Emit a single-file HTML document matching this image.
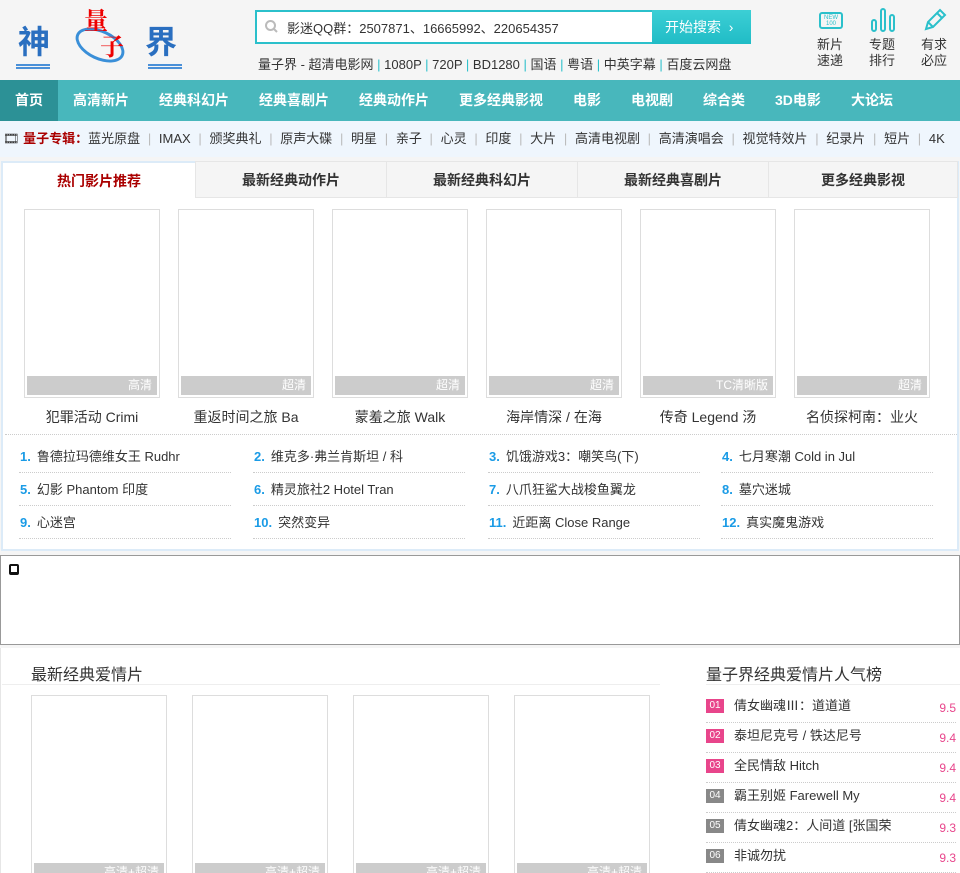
<!DOCTYPE html>
<html style="width:960px;height:873px;overflow:hidden"><head><meta charset="utf-8"><style>
*{margin:0;padding:0;box-sizing:border-box}
body{width:960px;height:873px;overflow:hidden;background:#f5f5f5;font-family:"Liberation Sans","Noto Sans CJK SC",sans-serif;font-size:13px;color:#333;position:relative}
.a{position:absolute}
.nav{top:80px;left:0;width:960px;height:41px;background:#48b7bc}
.nav span{position:absolute;top:0;line-height:41px;color:#fff;font-weight:bold;font-size:14px}
.sub{top:121px;left:0;width:960px;height:36px;background:#eff6fd;line-height:36px;font-size:13px;color:#333;padding-left:3px;white-space:nowrap}
.sub i{color:#bbb;font-style:normal;margin:0 7.7px}
.panel{top:161px;left:1px;width:958px;height:390px;background:#fff;border:2px solid #dcebf8;border-top:none}
.tab{position:absolute;top:0;height:37px;line-height:37px;text-align:center;font-weight:bold;font-size:14px;background:#f5f5f5;border:1px solid #e6e6e6;color:#333}
.p{position:absolute;border:1px solid #ddd;background:#fff;width:136px;height:189px}
.p b{position:absolute;left:2px;right:2px;bottom:2px;height:19px;background:#ccc;color:#fff;font-weight:normal;text-align:right;padding-right:5px;line-height:19px;font-size:12px}
.t{position:absolute;width:150px;text-align:center;font-size:14px;color:#333}
.li{position:absolute;width:212px;height:33px;line-height:33px;border-bottom:1px dotted #ccc;font-size:13px;padding-left:1px;white-space:nowrap;overflow:hidden}
.li em{color:#1a9be6;font-weight:bold;font-style:normal;margin-right:6px}
.rk{position:absolute;left:706px;width:250px;height:30px;border-bottom:1px dotted #ccc;font-size:13px}
.rk b{position:absolute;left:0;top:6px;width:18px;height:14px;font-size:10px;color:#fff;text-align:center;line-height:14px;font-weight:normal;background:#888}
.rk span{position:absolute;left:28px;top:2px}
.rk i{position:absolute;right:0;top:8px;color:#e8458b;font-style:normal;font-size:12px}
</style></head><body>
<div class="a" style="left:18px;top:20px;font-size:32px;color:#2a6fc0;font-weight:bold;font-family:'Noto Sans CJK SC',sans-serif;line-height:40px">神</div>
<div class="a" style="left:16px;top:64px;width:34px;height:5px;border-top:2px solid #4a90d8;border-bottom:2px solid #4a90d8"></div>
<div class="a" style="left:74px;top:30px;width:52px;height:30px;border:3px solid #3a8fd8;border-radius:50%;transform:rotate(25deg)"></div>
<div class="a" style="left:84px;top:6px;font-size:24px;color:#e00;font-weight:bold;font-family:'Noto Serif CJK SC',serif;line-height:26px">量<br><span style="margin-left:16px">子</span></div>
<div class="a" style="left:145px;top:20px;font-size:32px;color:#2a6fc0;font-weight:bold;font-family:'Noto Sans CJK SC',sans-serif;line-height:40px">界</div>
<div class="a" style="left:148px;top:64px;width:34px;height:5px;border-top:2px solid #4a90d8;border-bottom:2px solid #4a90d8"></div>
<div class="a" style="left:255px;top:10px;width:398px;height:34px;background:#fff;border:2px solid #2bc0cb;border-right:none"></div>
<svg class="a" style="left:264px;top:19px" width="16" height="16"><circle cx="6.5" cy="6.5" r="4.5" stroke="#bbb" stroke-width="2" fill="none"/><path d="M10 10 L13 13" stroke="#bbb" stroke-width="2"/></svg>
<div class="a" style="left:287px;top:18px;font-size:13px;color:#333">影迷QQ群：2507871、16665992、220654357</div>
<div class="a" style="left:652px;top:10px;width:99px;height:34px;background:linear-gradient(#3ccfd5,#20bcc6);color:#fff;font-size:14px;line-height:34px;padding-left:13px">开始搜索 &nbsp;›</div>
<div class="a" style="left:258px;top:54px;font-size:13px;color:#333;white-space:nowrap">量子界 - 超清电影网 <span style="color:#2bc0cb">|</span> 1080P <span style="color:#2bc0cb">|</span> 720P <span style="color:#2bc0cb">|</span> BD1280 <span style="color:#2bc0cb">|</span> 国语 <span style="color:#2bc0cb">|</span> 粤语 <span style="color:#2bc0cb">|</span> 中英字幕 <span style="color:#2bc0cb">|</span> 百度云网盘</div>
<div class="a" style="left:819px;top:12px;width:24px;height:17px;border:2px solid #2bc0cb;border-radius:3px;font-size:6px;color:#2bc0cb;text-align:center;line-height:6px;padding-top:1px">NEW<br>100</div>
<svg class="a" style="left:870px;top:7px" width="26" height="26"><g stroke="#2bc0cb" stroke-width="2" fill="none"><rect x="2" y="13" width="4" height="11" rx="2"/><rect x="11" y="2" width="4" height="22" rx="2"/><rect x="20" y="8" width="4" height="16" rx="2"/></g></svg>
<svg class="a" style="left:922px;top:7px" width="26" height="26"><path d="M4 22 L6 15 L18 3 L23 8 L11 20 Z M15 6 L20 11 M6 15 L11 20" stroke="#2bc0cb" stroke-width="2" fill="none"/></svg>
<div class="a" style="left:817px;top:37px;font-size:13px;line-height:16px;color:#333">新片<br>速递</div>
<div class="a" style="left:869px;top:37px;font-size:13px;line-height:16px;color:#333">专题<br>排行</div>
<div class="a" style="left:921px;top:37px;font-size:13px;line-height:16px;color:#333">有求<br>必应</div>
<div class="a nav"><div class="a" style="left:0;top:0;width:58px;height:41px;background:#2c9196"></div>
<span style="left:15px">首页</span><span style="left:73px">高清新片</span><span style="left:159px">经典科幻片</span><span style="left:259px">经典喜剧片</span><span style="left:359px">经典动作片</span><span style="left:459px">更多经典影视</span><span style="left:573px">电影</span><span style="left:631px">电视剧</span><span style="left:703px">综合类</span><span style="left:775px">3D电影</span><span style="left:851px">大论坛</span></div>
<div class="a sub">🎞 <b style="color:#a00">量子专辑：</b>蓝光原盘<i>|</i>IMAX<i>|</i>颁奖典礼<i>|</i>原声大碟<i>|</i>明星<i>|</i>亲子<i>|</i>心灵<i>|</i>印度<i>|</i>大片<i>|</i>高清电视剧<i>|</i>高清演唱会<i>|</i>视觉特效片<i>|</i>纪录片<i>|</i>短片<i>|</i>4K</div>
<div class="a panel">
<div class="tab" style="left:0;width:192px;background:#fff;border:none;border-top:2px solid #dcebf8;color:#a00">热门影片推荐</div>
<div class="tab" style="left:192px;width:192px">最新经典动作片</div>
<div class="tab" style="left:383px;width:192px">最新经典科幻片</div>
<div class="tab" style="left:574px;width:192px">最新经典喜剧片</div>
<div class="tab" style="left:765px;width:190px">更多经典影视</div>
<div class="p" style="left:21px;top:48px"><b>高清</b></div>
<div class="p" style="left:175px;top:48px"><b>超清</b></div>
<div class="p" style="left:329px;top:48px"><b>超清</b></div>
<div class="p" style="left:483px;top:48px"><b>超清</b></div>
<div class="p" style="left:637px;top:48px"><b>TC清晰版</b></div>
<div class="p" style="left:791px;top:48px"><b>超清</b></div>
<div class="t" style="left:14px;top:246px">犯罪活动 Crimi</div>
<div class="t" style="left:168px;top:246px">重返时间之旅 Ba</div>
<div class="t" style="left:322px;top:246px">蒙羞之旅 Walk</div>
<div class="t" style="left:476px;top:246px">海岸情深 / 在海</div>
<div class="t" style="left:630px;top:246px">传奇 Legend 汤</div>
<div class="t" style="left:784px;top:246px">名侦探柯南：业火</div>
<div class="a" style="left:2px;top:273px;width:952px;border-top:1px dotted #ccc"></div>
<div class="li" style="left:16px;top:279px"><em>1.</em>鲁德拉玛德维女王 Rudhr</div>
<div class="li" style="left:250px;top:279px"><em>2.</em>维克多·弗兰肯斯坦 / 科</div>
<div class="li" style="left:485px;top:279px"><em>3.</em>饥饿游戏3：嘲笑鸟(下)</div>
<div class="li" style="left:718px;top:279px"><em>4.</em>七月寒潮 Cold in Jul</div>
<div class="li" style="left:16px;top:312px"><em>5.</em>幻影 Phantom 印度</div>
<div class="li" style="left:250px;top:312px"><em>6.</em>精灵旅社2 Hotel Tran</div>
<div class="li" style="left:485px;top:312px"><em>7.</em>八爪狂鲨大战梭鱼翼龙</div>
<div class="li" style="left:718px;top:312px"><em>8.</em>墓穴迷城</div>
<div class="li" style="left:16px;top:345px"><em>9.</em>心迷宫</div>
<div class="li" style="left:250px;top:345px"><em>10.</em>突然变异</div>
<div class="li" style="left:485px;top:345px"><em>11.</em>近距离 Close Range</div>
<div class="li" style="left:718px;top:345px"><em>12.</em>真实魔鬼游戏</div>
</div>
<div class="a" style="left:0;top:555px;width:960px;height:90px;background:#fff;border:1px solid #999"></div>
<div class="a" style="left:9px;top:564px;width:10px;height:11px;border:2px solid #111;border-radius:2px;border-bottom-width:3px"></div>
<div class="a" style="left:0;top:648px;width:960px;height:225px;background:#fff;border-left:1px solid #e6e6e6"></div>
<div class="a" style="left:31px;top:661px;font-size:16px;color:#333">最新经典爱情片</div>
<div class="a" style="left:2px;top:684px;width:658px;border-top:1px solid #eee"></div>
<div class="p" style="left:31px;top:695px;height:190px"><b>高清+超清</b></div>
<div class="p" style="left:192px;top:695px;height:190px"><b>高清+超清</b></div>
<div class="p" style="left:353px;top:695px;height:190px"><b>高清+超清</b></div>
<div class="p" style="left:514px;top:695px;height:190px"><b>高清+超清</b></div>
<div class="a" style="left:706px;top:661px;font-size:16px;color:#333">量子界经典爱情片人气榜</div>
<div class="a" style="left:706px;top:684px;width:254px;border-top:1px solid #eee"></div>
<div class="rk" style="top:693px"><b style="background:#e8458b">01</b><span>倩女幽魂Ⅲ：道道道</span><i>9.5</i></div>
<div class="rk" style="top:723px"><b style="background:#e8458b">02</b><span>泰坦尼克号 / 铁达尼号</span><i>9.4</i></div>
<div class="rk" style="top:753px"><b style="background:#e8458b">03</b><span>全民情敌 Hitch</span><i>9.4</i></div>
<div class="rk" style="top:783px"><b>04</b><span>霸王别姬 Farewell My</span><i>9.4</i></div>
<div class="rk" style="top:813px"><b>05</b><span>倩女幽魂2：人间道 [张国荣</span><i>9.3</i></div>
<div class="rk" style="top:843px"><b>06</b><span>非诚勿扰</span><i>9.3</i></div>
</body></html>
